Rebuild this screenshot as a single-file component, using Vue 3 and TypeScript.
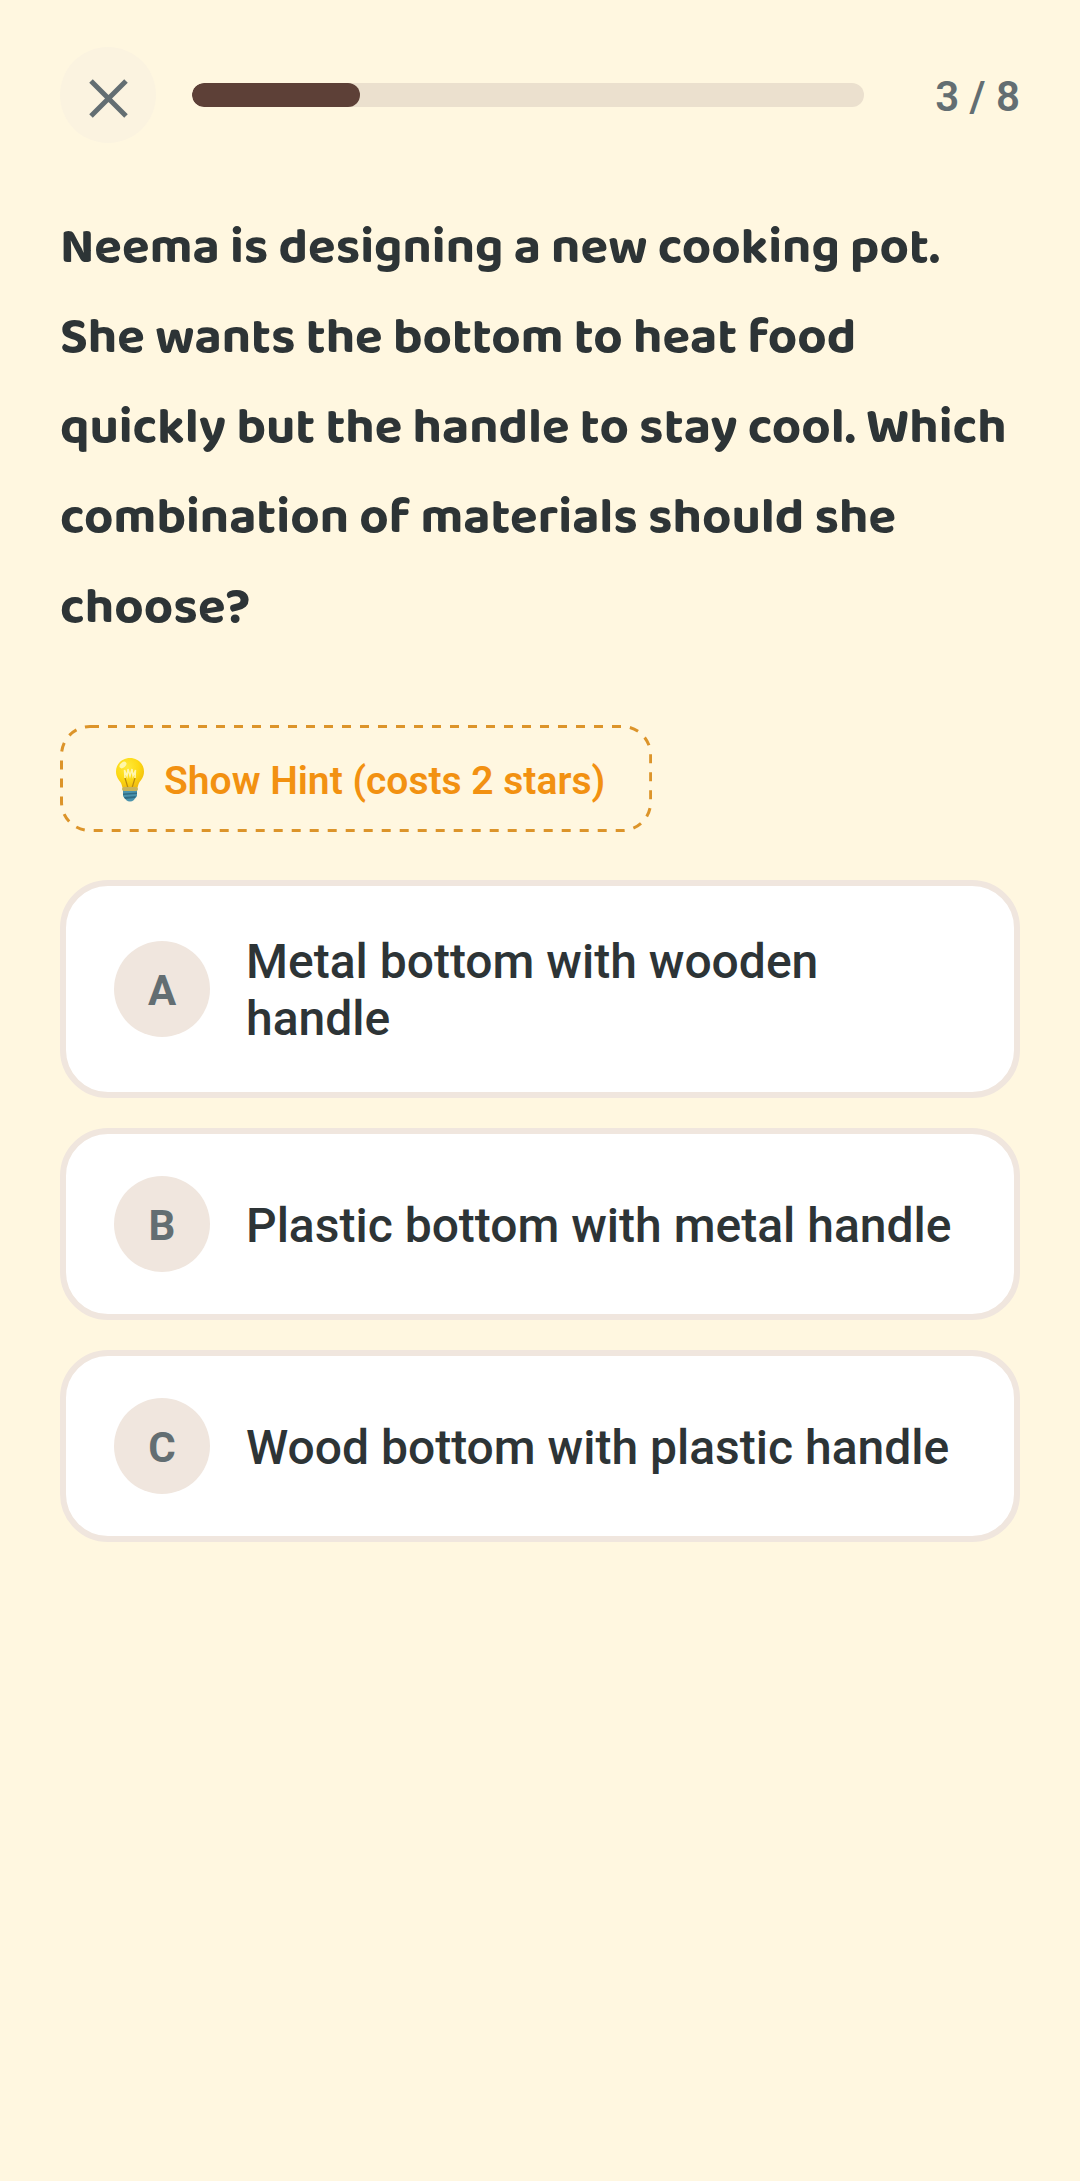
<script setup lang="ts">
import { computed, ref } from 'vue'

interface Option {
  letter: string
  text: string
}

const current = 3
const total = 8
const progress = computed(() => ((current - 1) / total) * 100)
const selected = ref<string | null>(null)

const question =
  'Neema is designing a new cooking pot. She wants the bottom to heat food quickly but the handle to stay cool. Which combination of materials should she choose?'

const options: Option[] = [
  { letter: 'A', text: 'Metal bottom with wooden handle' },
  { letter: 'B', text: 'Plastic bottom with metal handle' },
  { letter: 'C', text: 'Wood bottom with plastic handle' },
]
</script>

<template>
  <main class="quiz">
    <header class="top">
      <button class="close" type="button" aria-label="Close">
        <svg viewBox="0 0 96 96" aria-hidden="true">
          <path d="M31 34 L66 69 M66 34 L31 69" />
        </svg>
      </button>
      <div class="track" role="progressbar" aria-label="Progress" :aria-valuenow="progress">
        <div class="fill" :style="{ width: progress + '%' }"></div>
      </div>
      <span class="count">{{ current }} / {{ total }}</span>
    </header>

    <h1 class="question">{{ question }}</h1>

    <button class="hint" type="button">
      <svg class="dashes" aria-hidden="true">
        <rect class="outline" x="1.5" y="1.5" rx="28.5" />
      </svg>
      <svg class="bulb" viewBox="0 0 28 44" aria-hidden="true">
        <defs>
          <radialGradient id="glass" cx="0.4" cy="0.3" r="0.7">
            <stop offset="0" stop-color="#ffe93b" />
            <stop offset="0.6" stop-color="#fdd913" />
            <stop offset="1" stop-color="#f2bd0c" />
          </radialGradient>
        </defs>
        <path fill="url(#glass)" d="M14 0C6 0 0 6 0 13.500C0 19 3 22 5 25C6 27 6 29 7 30.500H21C22 29 22 27 23 25C25 22 28 19 28 13.500C28 6 22 0 14 0Z" />
        <path fill="none" stroke="#b98a10" stroke-width="1.200" d="M12 30L9 20M16 30L19 20" />
        <path fill="none" stroke="#fff6b0" stroke-width="1.500" d="M9 20L8.500 12L11 18L12 11L14 18L16 11L17 18L19.500 12L19 20" />
        <ellipse cx="7" cy="7" rx="4" ry="2.500" fill="#fff7a8" transform="rotate(-40 7 7)" />
        <path fill="#4a93ad" d="M7 32H21V38C20 40 18.500 40.500 18 42Q14 45 10 42C9.500 40.500 8 40 7 38Z" />
        <path fill="#2f6c85" d="M7 35.500L21 34.500V36L7 37ZM8 39L20 38L19 40L9 41Z" />
        <rect x="6" y="29" width="16" height="4" rx="2" fill="#c9b458" />
      </svg>
      <span class="hint-text">Show Hint (costs 2 stars)</span>
    </button>

    <div class="options">
      <button
        v-for="option in options"
        :key="option.letter"
        class="option"
        type="button"
        :aria-pressed="selected === option.letter"
        @click="selected = option.letter"
      >
        <span class="letter">{{ option.letter }}</span>
        <span class="label">{{ option.text }}</span>
      </button>
    </div>
  </main>
</template>

<style>
body {
  margin: 0;
  background: #fff7e0;
}
</style>

<style scoped>
.quiz {
  box-sizing: border-box;
  min-height: 100vh;
  padding: 47px 60px;
  background: #fff7e0;
  color: #2d3436;
  font-family: Roboto, 'Liberation Sans', sans-serif;
}

button {
  margin: 0;
  font: inherit;
  color: inherit;
  cursor: pointer;
}

.top {
  display: flex;
  align-items: center;
  gap: 36px;
}

.close {
  flex: none;
  width: 96px;
  height: 96px;
  padding: 0;
  border: 0;
  border-radius: 50%;
  background: #fbf3e0;
}

.close svg {
  display: block;
  fill: none;
  stroke: #636e72;
  stroke-width: 5;
}

.track {
  flex: 1;
  height: 24px;
  border-radius: 12px;
  background: #ebe0ce;
  overflow: hidden;
}

.fill {
  height: 100%;
  border-radius: 12px;
  background: #5d4037;
}

.count {
  min-width: 120px;
  padding-top: 4px;
  color: #636e72;
  font-size: 42px;
  font-weight: 600;
  line-height: 48px;
  text-align: right;
}

.question {
  margin: 60px 0 0;
  font-family: 'Baloo 2', Lato, sans-serif;
  font-size: 51px;
  font-weight: 700;
  line-height: 90px;
}

.hint {
  position: relative;
  display: flex;
  align-items: center;
  gap: 20px;
  margin-top: 72px;
  padding: 29px 47px 27px 56px;
  border: 0;
  border-radius: 30px;
  background: none;
  color: #f29111;
  font-size: 39px;
  font-weight: 600;
}

.hint-text {
  padding-top: 4px;
  line-height: 47px;
}

.dashes {
  position: absolute;
  inset: 0;
  width: 100%;
  height: 100%;
}

.outline {
  width: calc(100% - 3px);
  height: calc(100% - 3px);
  fill: none;
  stroke: #dc942a;
  stroke-width: 3;
  stroke-dasharray: 9 9;
}

.bulb {
  flex: none;
  width: 28px;
  height: 44px;
}

.options {
  display: flex;
  flex-direction: column;
  gap: 30px;
  margin-top: 48px;
}

.option {
  display: flex;
  align-items: center;
  gap: 36px;
  padding: 42px 48px;
  border: 6px solid #f0e6de;
  border-radius: 48px;
  background: #fff;
  text-align: left;
}

.letter {
  box-sizing: border-box;
  flex: none;
  width: 96px;
  height: 96px;
  padding-top: 4px;
  border-radius: 50%;
  background: #f0e6de;
  color: #636e72;
  font-size: 42px;
  font-weight: 700;
  line-height: 92px;
  text-align: center;
}

.label {
  flex: 1;
  padding: 5px 0 3px;
  font-size: 48px;
  font-weight: 500;
  line-height: 57px;
}
</style>
